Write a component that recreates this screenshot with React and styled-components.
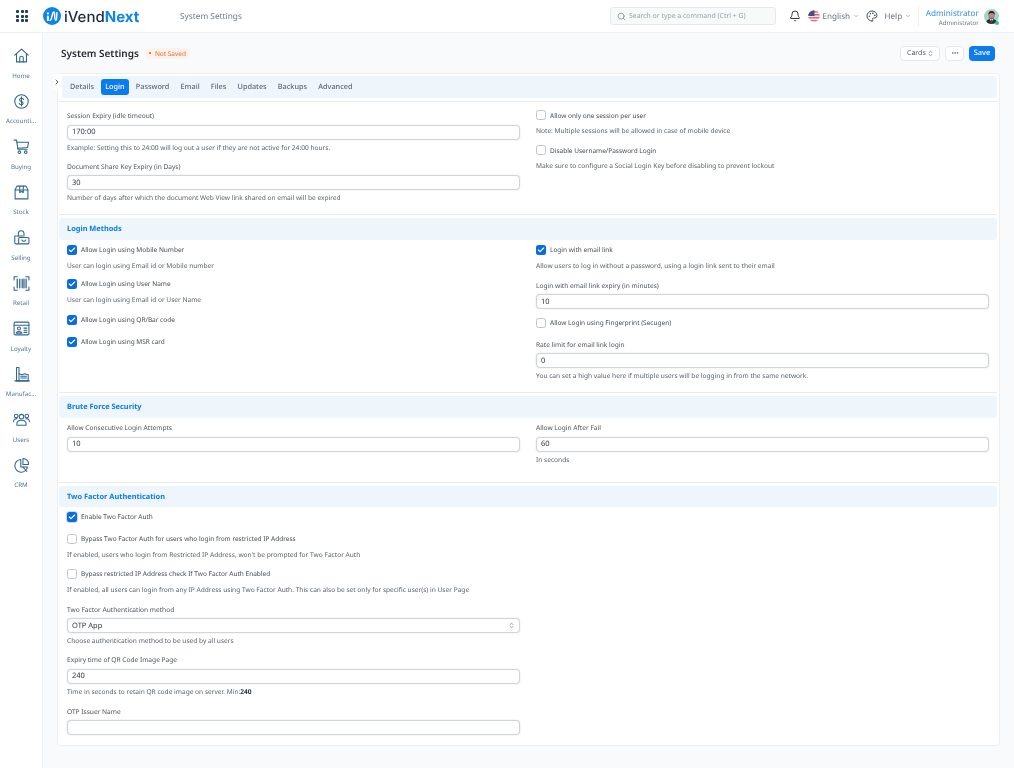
import React from 'react'
import styled, { createGlobalStyle } from 'styled-components'
import { Search, Bell, ChevronDown, ChevronRight, ChevronsUpDown, Palette, Ellipsis, Check } from 'lucide-react'

const GlobalStyle = createGlobalStyle`
  html, body { margin: 0; padding: 0; height: 100%; background: #f8fafc; }
  body { font-family: "Noto Sans", "Open Sans", sans-serif; color: #525c66; overflow: hidden; text-rendering: geometricPrecision; }
  * { box-sizing: border-box; }
`

const navIcons = {
  Home: <><path d="M2.5 11.5 12 3l9.5 8.5" /><path d="M5 9.5V21h14V9.5" /><path d="M9.5 21v-5.5a2.5 2.5 0 0 1 5 0V21" /></>,
  Accounting: <><circle cx="12" cy="12" r="9.5" /><path d="M15 9.2c-.4-1.2-1.6-1.8-3-1.8-3.4 0-3.8 3.9-.3 4.5 3.7.6 3.3 4.6 0 4.6-1.5 0-2.5-.7-2.9-1.9" /><path d="M12 5.5v13" /></>,
  Buying: <><path d="M1.5 3H5l2 13h13" /><path d="M5.5 6H22l-1.5 7.5-13.5 1" /><circle cx="9" cy="20" r="1.8" /><circle cx="18" cy="20" r="1.8" /></>,
  Stock: <><path d="M5.5 3h13L21 8v13H3V8z" /><path d="M3 8.5h18" /><path d="M9.5 3v9l2.5-1.5 2.5 1.5V3" /></>,
  Selling: <><path d="M7.5 10V6.5a4 4 0 0 1 8 0V10" /><path d="M2.5 10H14M2.5 10v9a2 2 0 0 0 2 2H8" /><rect x="8" y="12" width="14.5" height="9" rx="1.5" /><path d="M12.5 15.5a3 3 0 0 0 5.5 0" /></>,
  Retail: <><path d="M1.5 7V2.5H6M18 2.5h4.5V7M22.5 17v4.5H18M6 21.5H1.5V17" /><path d="M6 6v12M9.5 6v12M13 6v12M15.5 6v12M18.5 6v12" strokeWidth="1.8" /></>,
  Loyalty: <><rect x="1.5" y="3" width="21" height="18" rx="2" /><path d="M1.5 7.5h21" /><circle cx="8.5" cy="12" r="2.2" /><path d="M4.5 18.5c.4-3 7.6-3 8 0z" /><path d="M15.5 11.5h4M15.5 14.5h4M15.5 17.5h4" /></>,
  Manufacturing: <><path d="M5 2h3.5v19H5z" /><path d="M8.5 11l4 1.5 4-1.5 5 1.5V21h-13" /><path d="M2.5 21H23" /><path d="M11 17h8M11 14.5h8" /></>,
  Users: <><circle cx="12" cy="8" r="3.2" /><circle cx="4.5" cy="7" r="2.5" /><circle cx="19.5" cy="7" r="2.5" /><path d="M5.5 20v-2c0-6.5 13-6.5 13 0v2z" /><path d="M.8 15c0-3 2-4.3 4.7-4.2M23.2 15c0-3-2-4.3-4.7-4.2" /></>,
  CRM: <><path d="M11 3.5A9 9 0 1 0 20.5 14H11z" /><path d="M14 2a8 8 0 0 1 8 8.5h-8z" /><path d="M14 14l5.5 6.5" /></>,
}

const navItems = [
  { key: 'Home', label: 'Home' },
  { key: 'Accounting', label: 'Accounti...' },
  { key: 'Buying', label: 'Buying' },
  { key: 'Stock', label: 'Stock' },
  { key: 'Selling', label: 'Selling' },
  { key: 'Retail', label: 'Retail' },
  { key: 'Loyalty', label: 'Loyalty' },
  { key: 'Manufacturing', label: 'Manufac...' },
  { key: 'Users', label: 'Users' },
  { key: 'CRM', label: 'CRM' },
]

const tabs = ['Details', 'Login', 'Password', 'Email', 'Files', 'Updates', 'Backups', 'Advanced']

const Logo = () => (
  <svg width="18" height="18" viewBox="0 0 24 24">
    <circle cx="12" cy="12" r="12" fill="#1184e8" />
    <circle cx="6.5" cy="8.5" r="1.5" fill="#fff" />
    <path d="M6.5 12.5v5" stroke="#fff" strokeWidth="2.6" strokeLinecap="round" />
    <path d="M9.5 17.5c3 0 2.2-11 5-11 1.8 0 .2 11 2.6 11 1.4 0 1.4-5 1.4-10" fill="none" stroke="#fff" strokeWidth="2" strokeLinecap="round" />
  </svg>
)

const Flag = () => (
  <svg width="12" height="12" viewBox="0 0 24 24">
    <clipPath id="flagClip"><circle cx="12" cy="12" r="11.5" /></clipPath>
    <g clipPath="url(#flagClip)">
      <rect width="24" height="24" fill="#f3e4e6" />
      <path d="M0 2h24v3H0zM0 8h24v3H0zM0 14h24v3H0zM0 20h24v3H0z" fill="#d8707e" />
      <rect width="13" height="12" fill="#44508c" />
    </g>
  </svg>
)

const Avatar = () => (
  <AvatarWrap>
    <svg width="15" height="15" viewBox="0 0 24 24">
      <circle cx="12" cy="12" r="12" fill="#a9cfd2" />
      <clipPath id="avatarClip"><circle cx="12" cy="12" r="12" /></clipPath>
      <g clipPath="url(#avatarClip)">
        <path d="M3 24c0-6 4-8 9-8s9 2 9 8z" fill="#1f3346" />
        <path d="M9.5 16l2.5 6 2.5-6z" fill="#f2f2f2" />
        <path d="M11.3 17h1.4l.4 6h-2.2z" fill="#a3242c" />
        <circle cx="12" cy="10" r="5" fill="#b98a6c" />
        <path d="M7 10c-.5-5 2-7 5-7s6 2 5 7c-1-3-3-3.5-5-3.5S8 7 7 10z" fill="#26201e" />
        <path d="M7.5 11.5c1 5 8 5 9 0 0 6.5-9 6.5-9 0z" fill="#26201e" />
      </g>
    </svg>
    <Online />
  </AvatarWrap>
)

const CheckField = ({ checked, focused, label, help, gap }) => (
  <FieldBlock $gap={gap}>
    <CheckRow>
      <CheckBox $checked={checked} $focused={focused}>
        {checked && <Check size={8} strokeWidth={3.5} color="#fff" />}
      </CheckBox>
      <CheckLabel>{label}</CheckLabel>
    </CheckRow>
    {help && <CheckHelp>{help}</CheckHelp>}
  </FieldBlock>
)

const InputField = ({ label, value, help, select, gap }) => (
  <FieldBlock $gap={gap}>
    <Label>{label}</Label>
    <Input>
      {value}
      {select && <ChevronsUpDown size={7} color="#525c66" />}
    </Input>
    {help && <Help>{help}</Help>}
  </FieldBlock>
)

const App = () => {
  return (
    <>
      <GlobalStyle />
      <Page>
        <TopBar>
          <Apps>
            {Array.from({ length: 9 }).map((_, i) => <AppDot key={i} />)}
          </Apps>
          <Brand>
            <Logo />
            <BrandName>iVend<BrandAccent>Next</BrandAccent></BrandName>
          </Brand>
          <Crumb>System Settings</Crumb>
          <SearchBox>
            <Search size={9} color="#7c8791" />
            Search or type a command (Ctrl + G)
          </SearchBox>
          <BarActions>
            <Bell size={12} color="#333c44" />
            <Lang><Flag />English<ChevronDown size={6} /></Lang>
            <Palette size={12} color="#444e58" />
            <Lang>Help<ChevronDown size={6} /></Lang>
            <User>
              <UserName>Administrator</UserName>
              <UserRole>Administrator</UserRole>
            </User>
            <Avatar />
          </BarActions>
        </TopBar>
        <Body>
          <SideBar>
            {navItems.map(item => (
              <NavItem key={item.key}>
                <svg width="17" height="17" viewBox="0 0 24 24" fill="none" stroke="#2f6690" strokeWidth="1.5" strokeLinecap="round" strokeLinejoin="round">
                  {navIcons[item.key]}
                </svg>
                <NavLabel>{item.label}</NavLabel>
              </NavItem>
            ))}
          </SideBar>
          <Main>
            <HeadRow>
              <Title>System Settings</Title>
              <Badge><BadgeDot />Not Saved</Badge>
              <HeadActions>
                <GhostButton>Cards<ChevronsUpDown size={7} /></GhostButton>
                <IconButton><Ellipsis size={8} /></IconButton>
                <SaveButton>Save</SaveButton>
              </HeadActions>
            </HeadRow>
            <Card>
              <Toggle><ChevronRight size={8} strokeWidth={2.5} color="#333c44" /></Toggle>
              <TabBar>
                {tabs.map(tab => <Tab key={tab} $active={tab === 'Login'}>{tab}</Tab>)}
              </TabBar>
              <Section $first $top={9} $bottom={11}>
                <Column>
                  <InputField label="Session Expiry (idle timeout)" value="170:00" help="Example: Setting this to 24:00 will log out a user if they are not active for 24:00 hours." gap={9} />
                  <InputField label="Document Share Key Expiry (in Days)" value="30" help="Number of days after which the document Web View link shared on email will be expired" />
                </Column>
                <Column $raise={1}>
                  <CheckField label="Allow only one session per user" help="Note: Multiple sessions will be allowed in case of mobile device" gap={9} />
                  <CheckField label="Disable Username/Password Login" help="Make sure to configure a Social Login Key before disabling to prevent lockout" />
                </Column>
              </Section>
              <SectionHead>Login Methods</SectionHead>
              <Section $top={5} $bottom={11}>
                <Column>
                  <CheckField checked label="Allow Login using Mobile Number" help="User can login using Email id or Mobile number" gap={8} />
                  <CheckField checked label="Allow Login using User Name" help="User can login using Email id or User Name" gap={10} />
                  <CheckField checked label="Allow Login using QR/Bar code" gap={12} />
                  <CheckField checked label="Allow Login using MSR card" />
                </Column>
                <Column>
                  <CheckField checked label="Login with email link" help="Allow users to log in without a password, using a login link sent to their email" gap={10} />
                  <InputField label="Login with email link expiry (in minutes)" value="10" gap={8.5} />
                  <CheckField label="Allow Login using Fingerprint (Secugen)" gap={12} />
                  <InputField label="Rate limit for email link login" value="0" help="You can set a high value here if multiple users will be logging in from the same network." />
                </Column>
              </Section>
              <SectionHead>Brute Force Security</SectionHead>
              <Section $top={5.5} $bottom={17}>
                <Column>
                  <InputField label="Allow Consecutive Login Attempts" value="10" />
                </Column>
                <Column>
                  <InputField label="Allow Login After Fail" value="60" help="In seconds" />
                </Column>
              </Section>
              <SectionHead>Two Factor Authentication</SectionHead>
              <Section $last $top={4.5}>
                <Column>
                  <CheckField checked focused label="Enable Two Factor Auth" gap={12} />
                  <CheckField label="Bypass Two Factor Auth for users who login from restricted IP Address" help="If enabled, users who login from Restricted IP Address, won't be prompted for Two Factor Auth" gap={9} />
                  <CheckField label="Bypass restricted IP Address check If Two Factor Auth Enabled" help="If enabled, all users can login from any IP Address using Two Factor Auth. This can also be set only for specific user(s) in User Page" gap={10} />
                  <InputField select label="Two Factor Authentication method" value="OTP App" help="Choose authentication method to be used by all users" gap={9} />
                  <InputField label="Expiry time of QR Code Image Page" value="240" help={<>Time in seconds to retain QR code image on server. Min:<b>240</b></>} gap={10} />
                  <InputField label="OTP Issuer Name" />
                </Column>
              </Section>
            </Card>
          </Main>
        </Body>
      </Page>
    </>
  )
}

export default App

const Page = styled.div`
  width: 1014px;
  height: 768px;
  display: flex;
  flex-direction: column;
  overflow: hidden;
  will-change: transform;
`
const TopBar = styled.header`
  height: 33px;
  flex: none;
  display: flex;
  align-items: center;
  background: #fff;
  border-bottom: 1px solid #eef1f4;
  padding-left: 16px;
`
const Apps = styled.div`
  display: grid;
  grid-template-columns: repeat(3, 3px);
  gap: 1.5px;
  margin-right: 15px;
`
const AppDot = styled.span`
  width: 3px;
  height: 3px;
  border-radius: 1px;
  background: #1f3a63;
`
const Brand = styled.div`
  display: flex;
  align-items: center;
  gap: 3px;
  width: 137px;
`
const BrandName = styled.span`
  font-family: Inter, sans-serif;
  font-size: 15px;
  font-weight: 500;
  color: #1d2a3a;
`
const BrandAccent = styled.span`
  color: #1184e8;
  font-weight: 700;
`
const Crumb = styled.span`
  font-size: 8.3px;
  color: #6f7a85;
  width: 430px;
`
const SearchBox = styled.div`
  width: 166px;
  height: 18px;
  display: flex;
  align-items: center;
  gap: 3px;
  padding-left: 6px;
  font-size: 6.9px;
  color: #98a1a9;
  background: #f8fafa;
  border: 1px solid #e6eaed;
  border-radius: 3px;
`
const BarActions = styled.div`
  display: flex;
  align-items: center;
  margin-left: 13px;
  gap: 7px;
`
const Lang = styled.span`
  display: flex;
  align-items: center;
  gap: 2.5px;
  font-size: 8.1px;
  color: #68737d;
`
const User = styled.div`
  text-align: right;
  border-left: 1px solid #eef1f4;
  padding: 3px 0 0 7px;
`
const UserName = styled.div`
  font-size: 8.2px;
  line-height: 10px;
  color: #3b8fe8;
`
const UserRole = styled.div`
  font-size: 6.2px;
  line-height: 8px;
  color: #6f7a85;
`
const AvatarWrap = styled.div`
  position: relative;
  width: 15px;
  height: 15px;
  margin: -4px 0 0 -2px;
`
const Online = styled.span`
  position: absolute;
  right: 0;
  bottom: -3px;
  width: 4px;
  height: 4px;
  border-radius: 50%;
  background: #34c77b;
`
const Body = styled.div`
  flex: 1;
  display: flex;
  min-height: 0;
`
const SideBar = styled.nav`
  width: 43px;
  flex: none;
  background: #fff;
  border-right: 1px solid #eef1f4;
  padding-top: 14px;
  display: flex;
  flex-direction: column;
`
const NavItem = styled.div`
  height: 45.5px;
  display: flex;
  flex-direction: column;
  align-items: center;
`
const NavLabel = styled.span`
  font-size: 6.2px;
  line-height: 9px;
  margin-top: 6.5px;
  color: #4f7696;
`
const Main = styled.main`
  flex: 1;
  padding: 0 14px;
`
const HeadRow = styled.div`
  height: 40px;
  display: flex;
  align-items: center;
  padding: 0 5px 0 4px;
`
const Title = styled.h1`
  margin: 0;
  font-size: 10px;
  font-weight: 600;
  color: #1f272e;
`
const Badge = styled.span`
  display: flex;
  align-items: center;
  gap: 3.5px;
  margin-left: 6px;
  height: 11px;
  padding: 0 4px;
  border-radius: 6px;
  font-size: 6.5px;
  color: #e0703a;
  background: #fdf2ea;
`
const BadgeDot = styled.span`
  width: 2.5px;
  height: 2.5px;
  border-radius: 50%;
  background: #d9541e;
`
const HeadActions = styled.div`
  margin-left: auto;
  display: flex;
  align-items: center;
  gap: 5px;
`
const GhostButton = styled.div`
  width: 40px;
  height: 15px;
  display: flex;
  align-items: center;
  justify-content: space-between;
  padding: 0 5px 0 6px;
  font-size: 7px;
  color: #4a535c;
  background: #fff;
  border: 1px solid #e4e8eb;
  border-radius: 4px;
`
const IconButton = styled(GhostButton)`
  width: 19px;
  justify-content: center;
  padding: 0;
`
const SaveButton = styled(GhostButton)`
  width: 26px;
  justify-content: center;
  padding: 0;
  border: none;
  font-size: 7.5px;
  color: #fff;
  background: #0a7cf0;
  font-weight: 500;
`
const Card = styled.section`
  position: relative;
  background: #fff;
  border: 1px solid #eceff2;
  border-radius: 4px;
  padding: 2px 2px 2px 1px;
  height: 673px;
`
const Toggle = styled.div`
  position: absolute;
  left: -5px;
  top: 0;
  width: 8px;
  height: 16px;
  display: flex;
  align-items: center;
  justify-content: center;
  background: #fff;
  border-radius: 2px;
`
const TabBar = styled.div`
  height: 22px;
  display: flex;
  align-items: center;
  gap: 3.2px;
  margin-left: 3px;
  padding-left: 4px;
  border-radius: 3px;
  background: #eef5fb;
`
const Tab = styled.span`
  height: ${p => (p.$active ? '16px' : 'auto')};
  padding: 0 4px;
  display: flex;
  align-items: center;
  font-size: 7.3px;
  font-weight: 500;
  border-radius: 3px;
  color: ${p => (p.$active ? '#fff' : '#5f6973')};
  background: ${p => (p.$active ? '#0a7cf0' : 'transparent')};
`
const SectionHead = styled.h2`
  margin: 0;
  height: 21.5px;
  display: flex;
  align-items: center;
  padding: 1px 0 0 8px;
  font-size: 7.4px;
  font-weight: 700;
  color: #0a7cf0;
  border-radius: 3px;
  background: #eef5fb;
`
const Section = styled.div`
  display: grid;
  grid-template-columns: 1fr 1fr;
  column-gap: 16px;
  padding: ${p => p.$top}px 8px ${p => p.$bottom || 0}px;
  margin: ${p => (p.$first ? '3px' : '0')} 0 ${p => (p.$last ? '0' : '3px')};
  border-top: ${p => (p.$first ? '1px solid #e8ebee' : 'none')};
  border-bottom: ${p => (p.$last ? 'none' : '1px solid #e8ebee')};
`
const Column = styled.div`
  min-width: 0;
  margin-top: ${p => (p.$raise ? -p.$raise : 0)}px;
`
const FieldBlock = styled.div`
  margin-bottom: ${p => p.$gap || 0}px;
`
const Label = styled.div`
  font-size: 6.6px;
  line-height: 10px;
  margin-bottom: 3.5px;
  color: #4a525a;
`
const Input = styled.div`
  height: 15px;
  display: flex;
  align-items: center;
  justify-content: space-between;
  padding: 0 4px;
  font-size: 7.5px;
  color: #2f363d;
  background: #fff;
  border: 1px solid #d0d5d9;
  border-radius: 4px;
  box-shadow: 0 0 1.5px rgba(0, 0, 0, .18);
`
const Help = styled.div`
  font-size: 6.6px;
  line-height: 10px;
  margin-top: 3px;
  color: #59626b;
  b { color: #2f363d; }
`
const CheckHelp = styled(Help)`
  margin-top: 6px;
`
const CheckRow = styled.div`
  height: 10px;
  display: flex;
  align-items: center;
  gap: 4px;
`
const CheckBox = styled.span`
  width: 10px;
  height: 10px;
  display: flex;
  align-items: center;
  justify-content: center;
  border-radius: 2.5px;
  border: ${p => (p.$checked ? 'none' : '1px solid #bfc5ca')};
  background: ${p => (p.$checked ? '#0a6ce0' : '#fff')};
  box-shadow: ${p => (p.$focused ? '0 0 0 1px #c9d9ea' : 'none')};
`
const CheckLabel = styled.span`
  font-size: 6.5px;
  color: #454d55;
`
